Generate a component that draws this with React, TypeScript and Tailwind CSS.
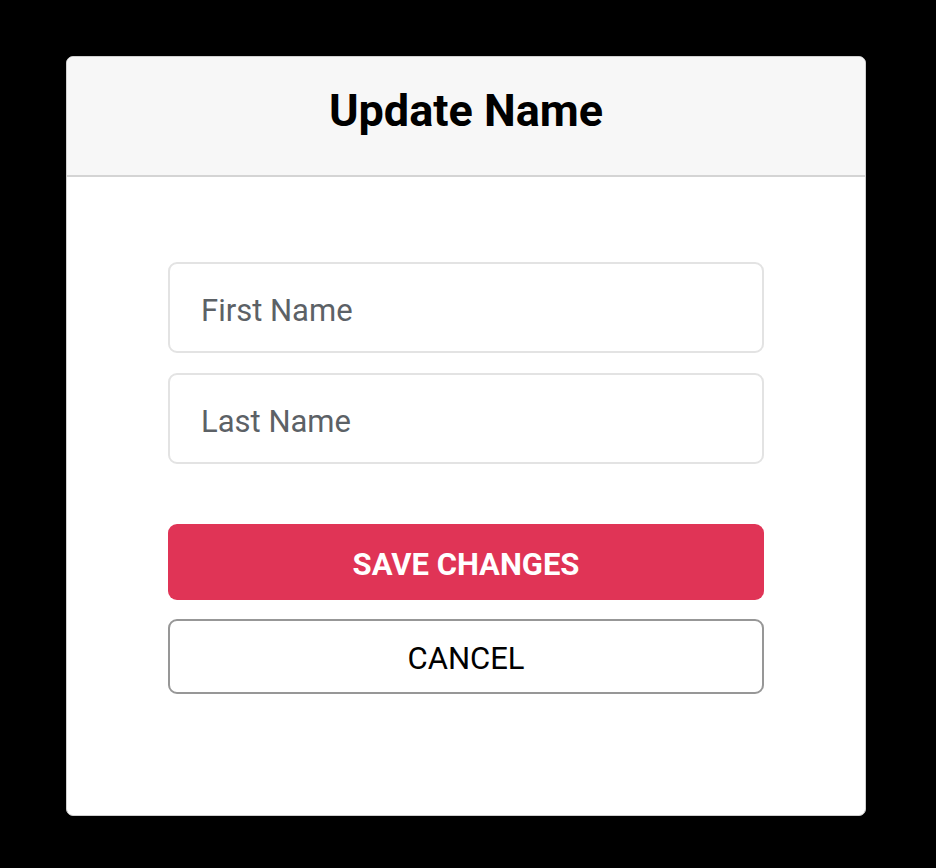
export default function App() {
  return (
    <div className="min-h-screen bg-black pt-[56px] font-['Roboto',sans-serif]">
      <div className="ml-[66px] w-[800px] overflow-hidden rounded-[7px] border border-[#cfcfcf] bg-white">
        {/* header */}
        <div className="flex h-[120px] items-center justify-center border-b-2 border-[#d4d4d4] bg-[#f7f7f7] pb-[12px]">
          <h1 className="text-[45px] leading-none font-bold text-black">Update Name</h1>
        </div>

        {/* body */}
        <div className="flex flex-col px-[101px] pt-[85px] pb-[121px]">
          <div className="flex flex-col gap-[20px]">
            <input
              placeholder="First Name"
              className="h-[91px] w-full rounded-[9px] border-2 border-[#e3e3e3] px-[31px] pt-[6px] text-[31px] text-black outline-none placeholder:text-[#5c6166]"
            />
            <input
              placeholder="Last Name"
              className="h-[91px] w-full rounded-[9px] border-2 border-[#e3e3e3] px-[31px] pt-[6px] text-[31px] text-black outline-none placeholder:text-[#5c6166]"
            />
          </div>

          <button className="mt-[60px] h-[76px] w-full rounded-[9px] bg-[#e03456] pt-[6px] text-[31px] font-bold text-white">
            SAVE CHANGES
          </button>
          <button className="mt-[19px] h-[75px] w-full rounded-[9px] border-2 border-[#979797] bg-white pt-[6px] text-[31px] text-black">
            CANCEL
          </button>
        </div>
      </div>
    </div>
  );
}
